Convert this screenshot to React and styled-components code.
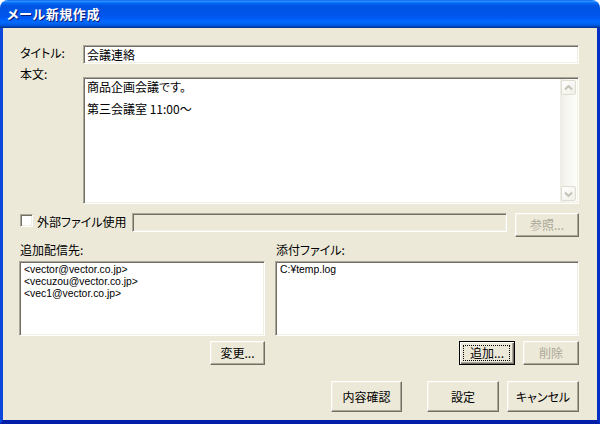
import React from 'react';
import styled, { createGlobalStyle, css } from 'styled-components';

const FONT = `"Noto Sans CJK JP", "Noto Sans CJK SC", "Noto Sans", sans-serif`;

const GlobalStyle = createGlobalStyle`
  html, body { margin: 0; padding: 0; background: #ffffff; }
  body { font-family: ${FONT}; }
  *, *::before, *::after { box-sizing: border-box; }
`;

const sunken = css`
  border: 1px solid;
  border-color: #aca899 #ffffff #ffffff #aca899;
  box-shadow: inset 1px 1px #716f64, inset -1px -1px #f1efe2;
`;

const Window = styled.div`
  width: 600px;
  height: 424px;
  display: flex;
  flex-direction: column;
  border-radius: 8px 8px 0 0;
  overflow: hidden;
  font-family: ${FONT};
  font-size: 12px;
  font-feature-settings: "palt";
  color: #000;
`;

const TitleBar = styled.div`
  height: 28px;
  flex: none;
  display: flex;
  align-items: center;
  padding: 0 0 1px 7px;
  background: linear-gradient(
    to bottom,
    #0058ee 0%,
    #3593ff 4%,
    #288eff 6%,
    #127dff 8%,
    #036ffc 10%,
    #0262ee 14%,
    #0057e5 20%,
    #0054e3 24%,
    #0055eb 56%,
    #005bf5 66%,
    #026afe 76%,
    #0062ef 86%,
    #0052d6 92%,
    #0040ab 96%,
    #003092 100%
  );
`;

const Title = styled.span`
  color: #ffffff;
  font-weight: bold;
  font-size: 13px;
  letter-spacing: 0.6px;
  text-shadow: 1px 1px 0 #0a1a7a;
`;

const Frame = styled.div`
  flex: 1;
  display: flex;
  border-left: 3px solid #0a47da;
  border-right: 3px solid #0630c4;
  border-bottom: 4px solid #001ea8;
`;

const Body = styled.div`
  flex: 1;
  display: flex;
  flex-direction: column;
  background: #ece9d8;
  padding: 17px 18px 8px 16px;
`;

const FieldRow = styled.div`
  display: grid;
  grid-template-columns: 64px 1fr;
  align-items: start;
  margin-top: ${p => p.$top ?? 0}px;
`;

const Label = styled.span`
  display: block;
  padding-left: 1px;
  line-height: ${p => p.$lh ?? 14}px;
  white-space: nowrap;
`;

const TextInput = styled.div`
  ${sunken};
  height: 19px;
  background: ${p => (p.$disabled ? '#ece9d8' : '#ffffff')};
  padding: 0 3px;
  line-height: 17px;
  flex: ${p => (p.$grow ? 1 : 'none')};
`;

const TextArea = styled.div`
  ${sunken};
  height: 127px;
  margin-top: 10px;
  background: #ffffff;
  display: flex;
  padding: 1px;
`;

const TextContent = styled.div`
  flex: 1;
  padding: 1px 1px 0 2px;
  line-height: 14px;
`;

const Para = styled.p`
  margin: 0 0 8px 0;
`;

const ScrollBar = styled.div`
  width: 17px;
  display: flex;
  flex-direction: column;
  justify-content: space-between;
  background: linear-gradient(to right, #eeede5, #f6f5f0 40%, #fdfdfa);
`;

const ScrollButton = styled.div`
  width: 17px;
  height: 17px;
  padding: 1px;
  display: flex;
`;

const ScrollFace = styled.div`
  flex: 1;
  border: 1px solid #e0ded3;
  border-radius: 2px;
  background: linear-gradient(135deg, #ffffff, #efeee7);
  display: flex;
  align-items: center;
  justify-content: center;
`;

const Chevron = ({ down }) => (
  <svg width="9" height="6" viewBox="0 0 9 6">
    <path
      d={down ? 'M1 1.5 L4.5 5 L8 1.5' : 'M1 4.5 L4.5 1 L8 4.5'}
      fill="none"
      stroke="#c4c2b5"
      strokeWidth="2"
    />
  </svg>
);

const CheckRow = styled.div`
  display: flex;
  align-items: flex-start;
  height: 24px;
  margin-top: 9px;
`;

const CheckGroup = styled.label`
  width: 113px;
  flex: none;
  display: flex;
  align-items: flex-start;
  padding-left: 1px;
`;

const CheckBox = styled.span`
  ${sunken};
  width: 13px;
  height: 13px;
  margin-top: 1px;
  background: #ffffff;
  flex: none;
`;

const CheckText = styled.span`
  margin-left: 4px;
  margin-top: 1px;
  line-height: 15px;
  white-space: nowrap;
`;

const Lists = styled.div`
  display: grid;
  grid-template-columns: 246px 1fr;
  column-gap: 10px;
  margin-top: 6px;
`;

const Column = styled.div`
  display: flex;
  flex-direction: column;
`;

const ListBox = styled.div`
  ${sunken};
  height: 75px;
  margin-top: 4px;
  background: #ffffff;
  padding: 2px 3px 2px 4px;
`;

const ListItem = styled.div`
  height: 12px;
  font-family: "Liberation Sans", Arial, sans-serif;
  font-size: 10.4px;
  line-height: 12px;
  white-space: nowrap;
`;

const ButtonRow = styled.div`
  display: flex;
  justify-content: flex-end;
  gap: ${p => p.$gap ?? 8}px;
  margin-top: ${p => p.$top ?? 0}px;
`;

const Button = styled.button`
  position: relative;
  width: ${p => p.$w}px;
  height: ${p => p.$h ?? 24}px;
  flex: none;
  margin: 0 0 0 ${p => p.$ml ?? 0}px;
  padding: 0 0 1px 0;
  font-family: ${FONT};
  font-size: 12px;
  font-feature-settings: "palt";
  color: ${p => (p.disabled ? '#aca899' : '#000000')};
  background: #ece9d8;
  border: 1px solid;
  border-color: #ffffff #716f64 #716f64 #ffffff;
  box-shadow: inset -1px -1px #aca899, inset 1px 1px #f1efe2;
  display: flex;
  align-items: center;
  justify-content: center;
  white-space: nowrap;
  ${p =>
    p.$focus &&
    css`
      border-color: #000000;
      box-shadow: inset 1px 1px #ffffff, inset -1px -1px #716f64, inset -2px -2px #aca899;
      &::after {
        content: '';
        position: absolute;
        top: 3px;
        left: 3px;
        right: 4px;
        bottom: 3px;
        border: 1px dotted #000000;
      }
    `}
`;

export default function App() {
  return (
    <>
      <GlobalStyle />
      <Window>
        <TitleBar>
          <Title>メール新規作成</Title>
        </TitleBar>
        <Frame>
          <Body>
            <FieldRow>
              <Label $lh={15}>タイトル:</Label>
              <TextInput>会議連絡</TextInput>
            </FieldRow>

            <FieldRow $top={3}>
              <Label>本文:</Label>
              <TextArea>
                <TextContent>
                  <Para>商品企画会議です。</Para>
                  <Para>第三会議室 11:00～</Para>
                </TextContent>
                <ScrollBar>
                  <ScrollButton>
                    <ScrollFace>
                      <Chevron />
                    </ScrollFace>
                  </ScrollButton>
                  <ScrollButton>
                    <ScrollFace>
                      <Chevron down />
                    </ScrollFace>
                  </ScrollButton>
                </ScrollBar>
              </TextArea>
            </FieldRow>

            <CheckRow>
              <CheckGroup>
                <CheckBox />
                <CheckText>外部ファイル使用</CheckText>
              </CheckGroup>
              <TextInput $disabled $grow />
              <Button $w={64} $ml={8} disabled>
                参照...
              </Button>
            </CheckRow>

            <Lists>
              <Column>
                <Label>追加配信先:</Label>
                <ListBox>
                  <ListItem>&lt;vector@vector.co.jp&gt;</ListItem>
                  <ListItem>&lt;vecuzou@vector.co.jp&gt;</ListItem>
                  <ListItem>&lt;vec1@vector.co.jp&gt;</ListItem>
                </ListBox>
                <ButtonRow $top={5}>
                  <Button $w={55}>変更...</Button>
                </ButtonRow>
              </Column>
              <Column>
                <Label>添付ファイル:</Label>
                <ListBox>
                  <ListItem>C:¥temp.log</ListItem>
                </ListBox>
                <ButtonRow $top={5}>
                  <Button $w={56} $focus>
                    追加...
                  </Button>
                  <Button $w={56} disabled>
                    削除
                  </Button>
                </ButtonRow>
              </Column>
            </Lists>

            <ButtonRow $top={16} $gap={0}>
              <Button $w={71} $h={31}>
                内容確認
              </Button>
              <Button $w={72} $h={31} $ml={25}>
                設定
              </Button>
              <Button $w={72} $h={31} $ml={8}>
                キャンセル
              </Button>
            </ButtonRow>
          </Body>
        </Frame>
      </Window>
    </>
  );
}
